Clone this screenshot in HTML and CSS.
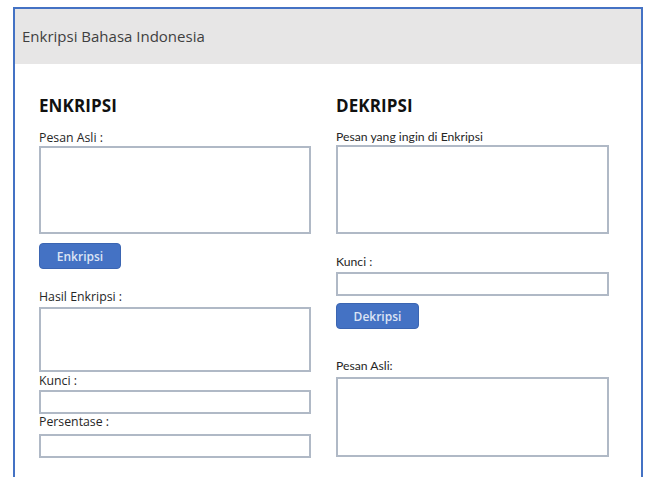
FILE: index.html
```html
<!DOCTYPE html>
<html lang="id">
<head>
<meta charset="utf-8">
<title>Enkripsi Bahasa Indonesia</title>
<link rel="stylesheet" href="styles.css">
</head>
<body>
<div class="frame">
  <header class="topbar">Enkripsi Bahasa Indonesia</header>
  <main class="panels">
    <section class="panel panel-enc">
      <h2 class="panel-title">ENKRIPSI</h2>
      <label class="lbl lbl-first">Pesan Asli :</label>
      <textarea class="field area-plain"></textarea>
      <button class="btn btn-enc">Enkripsi</button>
      <label class="lbl lbl-hasil">Hasil Enkripsi :</label>
      <textarea class="field area-result"></textarea>
      <label class="lbl lbl-tight">Kunci :</label>
      <input class="field line line-key" type="text">
      <label class="lbl lbl-none">Persentase :</label>
      <input class="field line line-pct" type="text">
    </section>
    <section class="panel panel-dec">
      <h2 class="panel-title">DEKRIPSI</h2>
      <label class="lbl lbl-alt lbl-first-alt">Pesan yang ingin di Enkripsi</label>
      <textarea class="field area-cipher"></textarea>
      <label class="lbl lbl-alt lbl-key-alt">Kunci :</label>
      <input class="field line line-key-alt" type="text">
      <button class="btn btn-dec">Dekripsi</button>
      <label class="lbl lbl-alt lbl-out">Pesan Asli:</label>
      <textarea class="field area-out"></textarea>
    </section>
  </main>
</div>
</body>
</html>
```
FILE: styles.css
```css
html, body {
  margin: 0;
  padding: 0;
  overflow: hidden;
  background: #ffffff;
}

body {
  font-family: "Open Sans", "Noto Sans", sans-serif;
  color: #262626;
}

.frame {
  margin: 7px 0 0 13px;
  width: 626px;
  height: calc(100vh - 7px);
  border: 2px solid #4472C4;
  border-bottom: none;
  box-sizing: content-box;
}

.topbar {
  height: 55px;
  background: #E7E6E6;
  display: flex;
  align-items: center;
  padding-left: 7px;
  font-size: 15px;
  color: #3f3f3f;
  padding-bottom: 1px;
  box-sizing: border-box;
}

.panels {
  display: grid;
  grid-template-columns: 272px 273px;
  column-gap: 25px;
  padding: 31px 0 0 24px;
}

.panel {
  display: flex;
  flex-direction: column;
  align-items: flex-start;
}

.panel-title {
  margin: 0;
  font-size: 17px;
  line-height: 22px;
  font-weight: 700;
  color: #111;
  letter-spacing: 0.1px;
}

.lbl {
  display: block;
  font-size: 12.3px;
  line-height: 16px;
  color: #262626;
}

.lbl-alt {
  font-family: "Lato", "Open Sans", sans-serif;
  font-size: 12.2px;
}

.lbl-first { margin-top: 13px; }
.lbl-first-alt { margin-top: 12px; }
.lbl-hasil { margin-top: 20px; }
.lbl-tight { margin-top: 1px; }
.lbl-none { margin-top: 0; }
.lbl-key-alt { margin-top: 20px; }
.lbl-out { margin-top: 29px; }

.field {
  display: block;
  width: 100%;
  margin: 0;
  padding: 0;
  box-sizing: border-box;
  border: 2px solid #B0B9C6;
  background: #fff;
  resize: none;
  outline: none;
  font: inherit;
}

.area-plain { height: 88px; }
.area-cipher { height: 89px; margin-top: 0; }
.area-result { height: 65px; margin-top: 2px; }
.area-out { height: 80px; margin-top: 3px; }

.line { height: 24px; }
.line-key { margin-top: 1px; }
.line-pct { margin-top: 4px; }
.line-key-alt { margin-top: 2px; }

.btn {
  height: 26px;
  border: 1px solid #3B65B2;
  border-radius: 4px;
  background: #4472C4;
  color: #DCE4F4;
  font-family: "Open Sans", sans-serif;
  font-size: 12px;
  font-weight: 600;
  padding: 0;
  cursor: pointer;
}

.btn-enc { width: 82px; margin-top: 9px; }
.btn-dec { width: 83px; margin-top: 7px; }
```
